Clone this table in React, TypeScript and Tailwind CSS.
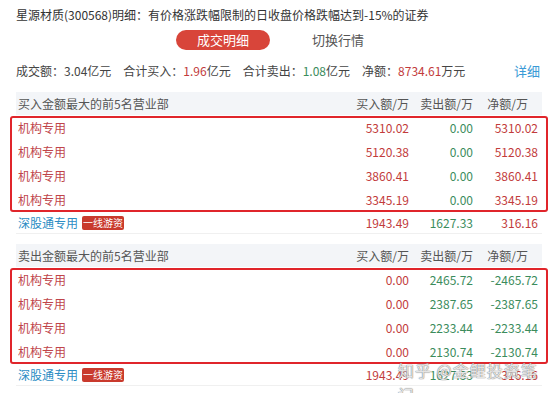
import React from "react";

// Row data for the two "top 5 brokers" tables
interface Row {
  name: string;
  buy: string;
  sell: string;
  net: string;
}

const buyRows: Row[] = [
  { name: "机构专用", buy: "5310.02", sell: "0.00", net: "5310.02" },
  { name: "机构专用", buy: "5120.38", sell: "0.00", net: "5120.38" },
  { name: "机构专用", buy: "3860.41", sell: "0.00", net: "3860.41" },
  { name: "机构专用", buy: "3345.19", sell: "0.00", net: "3345.19" },
];

const sellRows: Row[] = [
  { name: "机构专用", buy: "0.00", sell: "2465.72", net: "-2465.72" },
  { name: "机构专用", buy: "0.00", sell: "2387.65", net: "-2387.65" },
  { name: "机构专用", buy: "0.00", sell: "2233.44", net: "-2233.44" },
  { name: "机构专用", buy: "0.00", sell: "2130.74", net: "-2130.74" },
];

const RED = "text-[#c23b3b]";
const GREEN = "text-[#3b8c5c]";

const DataRow = ({ row, netRed }: { row: Row; netRed: boolean }) => (
  <div className="flex h-6 items-center">
    <div className="flex-1 pl-[8px] text-[#c0444a]">{row.name}</div>
    <div className={`w-[80px] text-right ${RED}`}>{row.buy}</div>
    <div className={`w-[64px] text-right ${GREEN}`}>{row.sell}</div>
    <div className={`w-[65px] text-right ${netRed ? RED : GREEN}`}>{row.net}</div>
    <div className="w-[10px]" />
  </div>
);

const Section = ({ title, rows, netRed }: { title: string; rows: Row[]; netRed: boolean }) => (
  <div className="mx-[16px] w-[526px]">
    <div className="flex h-[23px] items-center bg-[#f3f5f8] text-[#555]">
      <div className="flex-1 pl-[2px]">{title}</div>
      <div className="w-[80px] text-right">买入额/万</div>
      <div className="w-[64px] text-right">卖出额/万</div>
      <div className="w-[65px] pr-[10px] text-right">净额/万</div>
      <div className="w-[4px]" />
    </div>
    <div className="-mx-[6px] mt-px rounded-[3px] ring-2 ring-inset ring-[#e0252b]">
      {rows.map((r, i) => (
        <DataRow key={i} row={r} netRed={netRed} />
      ))}
    </div>
    <div className="flex h-[22px] items-center border-b border-[#f0f0f0]">
      <div className="flex flex-1 items-center pl-[2px]">
        <span className="text-[#2b8dc4]">深股通专用</span>
        <span className="ml-[4px] rounded-[2px] bg-[#c93a2d] px-px text-[10px] leading-[14px] text-white">
          一线游资
        </span>
      </div>
      <div className={`w-[80px] text-right ${RED}`}>1943.49</div>
      <div className={`w-[64px] text-right ${GREEN}`}>1627.33</div>
      <div className={`w-[65px] text-right ${RED}`}>316.16</div>
      <div className="w-[4px]" />
    </div>
  </div>
);

export default function App() {
  return (
    <div className="relative h-[393px] w-[554px] overflow-hidden bg-white text-[12px] text-[#444] font-['Microsoft_YaHei','Noto_Sans_CJK_SC',sans-serif]">
      <div className="h-[18px] pl-[16px] pt-[6px] leading-[18px] text-[#333] box-content">
        星源材质(300568)明细：有价格涨跌幅限制的日收盘价格跌幅达到-15%的证券
      </div>

      <div className="mt-[6px] flex h-[20px] items-center pl-[176px]">
        <div className="flex h-[20px] w-[94px] items-center justify-center rounded-full bg-[#d8453a] text-[13px] text-white">
          成交明细
        </div>
        <div className="ml-[42px] text-[13px] text-[#555]">切换行情</div>
      </div>

      <div className="mt-[12px] flex h-[18px] items-center justify-between pl-[16px] pr-[14px] leading-[18px]">
        <div className="flex gap-[12px]">
          <span>成交额：3.04亿元</span>
          <span>
            合计买入：<span className={RED}>1.96</span>亿元
          </span>
          <span>
            合计卖出：<span className={GREEN}>1.08</span>亿元
          </span>
          <span>
            净额：<span className={RED}>8734.61</span>万元
          </span>
        </div>
        <div className="text-[13px] text-[#3a9ad6]">详细</div>
      </div>

      <div className="mt-[12px]">
        <Section title="买入金额最大的前5名营业部" rows={buyRows} netRed={true} />
      </div>
      <div className="mt-[10px]">
        <Section title="卖出金额最大的前5名营业部" rows={sellRows} netRed={false} />
      </div>

      {/* watermark */}
      <div className="absolute left-[398px] top-[358px] text-[16px] tracking-[1px] text-white/80 [text-shadow:0_0_1px_#777,0_0_1px_#777]">
        知乎 @金鲤投资笔记
      </div>
    </div>
  );
}
